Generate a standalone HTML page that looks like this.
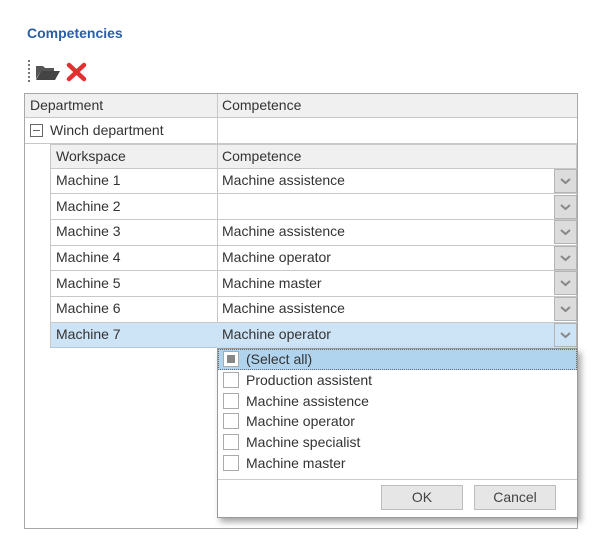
<!DOCTYPE html>
<html><head><style>
*{box-sizing:border-box;margin:0;padding:0}
body{width:600px;height:557px;background:#fff;font-family:"Segoe UI","Liberation Sans",sans-serif;font-size:14px;color:#333;position:relative;overflow:hidden}
.a{position:absolute}
.t{position:absolute;white-space:nowrap;line-height:25px}
.cell{position:absolute;border:1px solid #c8c8c8}
.dd{position:absolute;left:554px;width:23px;height:24px;background:#dcdcdc;border:1px solid #b4b4b4}
.cb{position:absolute;left:223px;width:16px;height:16px;border:1px solid #aaa;background:#fff}
.btn{position:absolute;top:485px;height:25px;background:#e6e6e6;border:1px solid #bdbdbd;text-align:center;line-height:23px;color:#444}
</style></head><body>
<div class="t" style="left:27px;top:21px;color:#2a5ea8;font-weight:bold;font-size:14px">Competencies</div>
<div class="a" style="left:28px;top:60px;width:2px;height:22px;border-left:2px dotted #777"></div>
<svg class="a" style="left:35px;top:63px" width="26" height="18" viewBox="0 0 26 18"><path d="M1 3h7l2 2h9v3H6L1 16z" fill="#555"/><path d="M6 8h19l-5 9H1z" fill="#444"/></svg>
<svg class="a" style="left:66px;top:62px" width="21" height="20" viewBox="0 0 21 20"><path d="M3 3L18 17M18 3L3 17" stroke="#e03030" stroke-width="4.5" stroke-linecap="round"/></svg>
<div class="a" style="left:24px;top:93px;width:554px;height:436px;border:1px solid #a8a8a8"></div>
<div class="a" style="left:25px;top:94px;width:552px;height:24px;background:#f0f0f0;border-bottom:1px solid #c8c8c8"></div>
<div class="a" style="left:217px;top:94px;width:1px;height:50px;background:#c8c8c8"></div>
<div class="t" style="left:30px;top:93px">Department</div>
<div class="t" style="left:222px;top:93px">Competence</div>
<div class="a" style="left:25px;top:143px;width:552px;height:1px;background:#c8c8c8"></div>
<div class="a" style="left:30px;top:124px;width:13px;height:13px;border:1px solid #666"></div>
<div class="a" style="left:33px;top:130px;width:7px;height:1px;background:#666"></div>
<div class="t" style="left:50px;top:118px">Winch department</div>
<div class="a" style="left:50px;top:144px;width:527px;height:25px;background:#f0f0f0;border:1px solid #c8c8c8"></div>
<div class="a" style="left:217px;top:144px;width:1px;height:204px;background:#c8c8c8"></div>
<div class="t" style="left:56px;top:144px">Workspace</div>
<div class="t" style="left:222px;top:144px">Competence</div>

<div class="a" style="left:50px;top:322px;width:527px;height:26px;background:#cde3f6"></div>
<div class="a" style="left:50px;top:168px;width:1px;height:180px;background:#c8c8c8"></div>
<div class="a" style="left:576px;top:168px;width:1px;height:180px;background:#c8c8c8"></div>
<div class="a" style="left:50px;top:193px;width:527px;height:1px;background:#c8c8c8"></div>
<div class="a" style="left:50px;top:219px;width:527px;height:1px;background:#c8c8c8"></div>
<div class="a" style="left:50px;top:245px;width:527px;height:1px;background:#c8c8c8"></div>
<div class="a" style="left:50px;top:270px;width:527px;height:1px;background:#c8c8c8"></div>
<div class="a" style="left:50px;top:296px;width:527px;height:1px;background:#c8c8c8"></div>
<div class="a" style="left:50px;top:322px;width:527px;height:1px;background:#c8c8c8"></div>
<div class="a" style="left:50px;top:347px;width:167px;height:1px;background:#b0c8dc"></div>

<div class="t" style="left:56px;top:168px">Machine 1</div><div class="t" style="left:222px;top:168px">Machine assistence</div>
<div class="t" style="left:56px;top:194px">Machine 2</div>
<div class="t" style="left:56px;top:219px">Machine 3</div><div class="t" style="left:222px;top:219px">Machine assistence</div>
<div class="t" style="left:56px;top:245px">Machine 4</div><div class="t" style="left:222px;top:245px">Machine operator</div>
<div class="t" style="left:56px;top:271px">Machine 5</div><div class="t" style="left:222px;top:271px">Machine master</div>
<div class="t" style="left:56px;top:296px">Machine 6</div><div class="t" style="left:222px;top:296px">Machine assistence</div>
<div class="t" style="left:56px;top:322px">Machine 7</div><div class="t" style="left:222px;top:322px">Machine operator</div>

<div class="dd" style="top:169px"></div><div class="dd" style="top:195px"></div><div class="dd" style="top:220px"></div><div class="dd" style="top:246px"></div><div class="dd" style="top:271px"></div><div class="dd" style="top:297px"></div><div class="dd" style="top:323px;background:#cde3f6"></div>
<svg class="a" style="left:554px;top:169px" width="23" height="180"><g fill="none" stroke="#888" stroke-width="2"><path d="M7 10l4.5 4 4.5-4"/><path d="M7 36l4.5 4 4.5-4"/><path d="M7 61l4.5 4 4.5-4"/><path d="M7 87l4.5 4 4.5-4"/><path d="M7 112l4.5 4 4.5-4"/><path d="M7 138l4.5 4 4.5-4"/><path d="M7 164l4.5 4 4.5-4"/></g></svg>

<div class="a" style="left:217px;top:348px;width:361px;height:170px;background:#fff;border:1px solid #999;box-shadow:3px 4px 6px rgba(0,0,0,.35)"></div>
<div class="a" style="left:218px;top:349px;width:359px;height:21px;background:#b0d4ee;border:1px dotted #666"></div>
<div class="cb" style="top:351px"></div><div class="a" style="left:227px;top:355px;width:8px;height:8px;background:#888"></div>
<div class="t" style="left:246px;top:347px">(Select all)</div>
<div class="cb" style="top:372px"></div><div class="t" style="left:246px;top:368px">Production assistent</div>
<div class="cb" style="top:393px"></div><div class="t" style="left:246px;top:389px">Machine assistence</div>
<div class="cb" style="top:413px"></div><div class="t" style="left:246px;top:409px">Machine operator</div>
<div class="cb" style="top:434px"></div><div class="t" style="left:246px;top:430px">Machine specialist</div>
<div class="cb" style="top:455px"></div><div class="t" style="left:246px;top:451px">Machine master</div>
<div class="a" style="left:218px;top:479px;width:359px;height:1px;background:#ccc"></div>
<div class="btn" style="left:381px;width:82px">OK</div>
<div class="btn" style="left:474px;width:82px">Cancel</div>
</body></html>
